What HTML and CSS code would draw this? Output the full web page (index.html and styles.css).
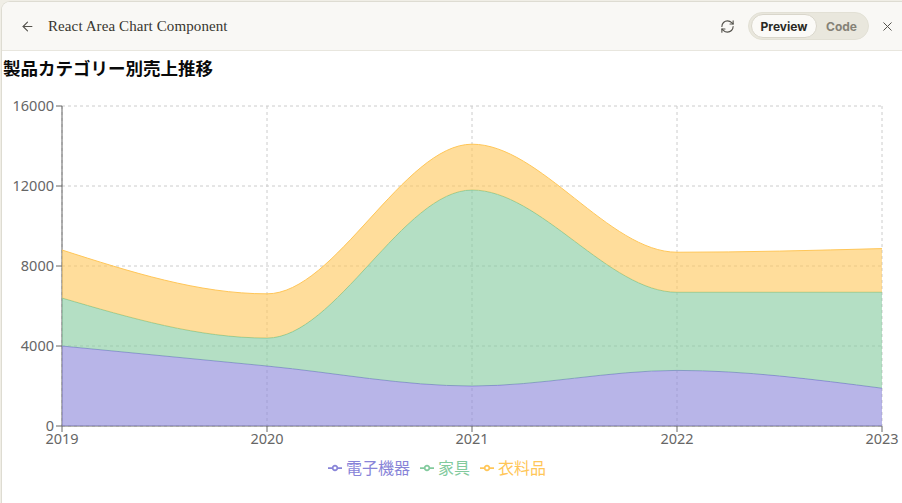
FILE: index.html
```html
<!DOCTYPE html>
<html lang="ja">
<head>
<meta charset="utf-8">
<title>React Area Chart Component</title>
<link rel="stylesheet" href="styles.css">
</head>
<body>
<div class="frame">
  <div class="panel">
    <header class="topbar">
      <div class="topbar-left">
        <svg class="icon icon-back" viewBox="0 0 24 24" width="15" height="15"><path d="M12 19l-7-7 7-7"/><path d="M19 12H5"/></svg>
        <span class="doc-title">React Area Chart Component</span>
      </div>
      <div class="topbar-right">
        <svg class="icon icon-refresh" viewBox="0 0 24 24" width="15" height="15"><path d="M3 12a9 9 0 0 1 9-9 9.75 9.75 0 0 1 6.74 2.74L21 8"/><path d="M21 3v5h-5"/><path d="M21 12a9 9 0 0 1-9 9 9.75 9.75 0 0 1-6.74-2.74L3 16"/><path d="M8 16H3v5"/></svg>
        <div class="toggle">
          <span class="seg seg-active">Preview</span>
          <span class="seg">Code</span>
        </div>
        <svg class="icon icon-close" viewBox="0 0 24 24" width="15" height="15"><path d="M18 6 6 18"/><path d="m6 6 12 12"/></svg>
      </div>
    </header>
    <main class="content">
      <h2 class="chart-title">製品カテゴリー別売上推移</h2>
      <svg class="chart" viewBox="2 84 900 400" width="900" height="400">
        <g class="grid">
          <line x1="62" y1="425" x2="882" y2="425"/>
          <line x1="62" y1="345" x2="882" y2="345"/>
          <line x1="62" y1="265" x2="882" y2="265"/>
          <line x1="62" y1="185" x2="882" y2="185"/>
          <line x1="62" y1="105" x2="882" y2="105"/>
          <line x1="62" y1="105" x2="62" y2="425"/>
          <line x1="267" y1="105" x2="267" y2="425"/>
          <line x1="472" y1="105" x2="472" y2="425"/>
          <line x1="677" y1="105" x2="677" y2="425"/>
          <line x1="882" y1="105" x2="882" y2="425"/>
        </g>
        <g class="axis">
          <line x1="62" y1="425" x2="882" y2="425"/>
          <line x1="62" y1="105" x2="62" y2="425"/>
          <line x1="62" y1="425" x2="62" y2="431"/>
          <line x1="267" y1="425" x2="267" y2="431"/>
          <line x1="472" y1="425" x2="472" y2="431"/>
          <line x1="677" y1="425" x2="677" y2="431"/>
          <line x1="882" y1="425" x2="882" y2="431"/>
          <line x1="56" y1="425" x2="62" y2="425"/>
          <line x1="56" y1="345" x2="62" y2="345"/>
          <line x1="56" y1="265" x2="62" y2="265"/>
          <line x1="56" y1="185" x2="62" y2="185"/>
          <line x1="56" y1="105" x2="62" y2="105"/>
        </g>
        <g class="tick-labels">
          <text class="ytick" x="54" y="425" dy="0.355em">0</text>
          <text class="ytick" x="54" y="345" dy="0.355em">4000</text>
          <text class="ytick" x="54" y="265" dy="0.355em">8000</text>
          <text class="ytick" x="54" y="185" dy="0.355em">12000</text>
          <text class="ytick" x="54" y="105" dy="0.355em">16000</text>
          <text class="xtick" x="62" y="433" dy="0.71em">2019</text>
          <text class="xtick" x="267" y="433" dy="0.71em">2020</text>
          <text class="xtick" x="472" y="433" dy="0.71em">2021</text>
          <text class="xtick" x="677" y="433" dy="0.71em">2022</text>
          <text class="xtick" x="882" y="433" dy="0.71em">2023</text>
        </g>
        <g class="areas">
          <path id="a1-fill" class="area-fill fill-purple"/>
          <path id="a1-line" class="area-line line-purple"/>
          <path id="a2-fill" class="area-fill fill-green"/>
          <path id="a2-line" class="area-line line-green"/>
          <path id="a3-fill" class="area-fill fill-yellow"/>
          <path id="a3-line" class="area-line line-yellow"/>
        </g>
        <g class="legend">
          <svg x="328" y="460" width="14" height="14" viewBox="0 0 32 32" class="legend-icon line-purple"><path d="M0,16h10.67A5.33,5.33,0,1,1,21.33,16H32M21.33,16A5.33,5.33,0,1,1,10.67,16"/></svg>
          <text class="legend-text text-purple" x="346" y="472.5">電子機器</text>
          <svg x="420" y="460" width="14" height="14" viewBox="0 0 32 32" class="legend-icon line-green"><path d="M0,16h10.67A5.33,5.33,0,1,1,21.33,16H32M21.33,16A5.33,5.33,0,1,1,10.67,16"/></svg>
          <text class="legend-text text-green" x="438" y="472.5">家具</text>
          <svg x="480" y="460" width="14" height="14" viewBox="0 0 32 32" class="legend-icon line-yellow"><path d="M0,16h10.67A5.33,5.33,0,1,1,21.33,16H32M21.33,16A5.33,5.33,0,1,1,10.67,16"/></svg>
          <text class="legend-text text-yellow" x="498" y="472.5">衣料品</text>
        </g>
      </svg>
    </main>
  </div>
</div>
<script src="script.js"></script>
</body>
</html>
```

FILE: styles.css
```css
* { box-sizing: border-box; }
html, body { margin: 0; height: 100%; }
body {
  background: #f0eee6;
  overflow: hidden;
  font-family: "Noto Sans", "Noto Sans CJK JP", sans-serif;
}
.frame {
  height: 100%;
  padding: 1px 0 0 1px;
}
.panel {
  height: 100%;
  background: #ffffff;
  border-top: 1px solid #dedcd2;
  border-left: 1px solid #dedcd2;
  border-top-left-radius: 9px;
  overflow: hidden;
  display: flex;
  flex-direction: column;
}
.topbar {
  height: 49px;
  flex: none;
  background: #f9f8f5;
  border-bottom: 1px solid #e8e6de;
  display: flex;
  align-items: center;
  justify-content: space-between;
  padding: 0 7px 0 18px;
}
.topbar-left, .topbar-right {
  display: flex;
  align-items: center;
}
.topbar-left { gap: 13px; }
.topbar-right { gap: 13px; }
.icon-close { margin-left: -2px; }
.icon {
  fill: none;
  stroke: #55534d;
  stroke-width: 1.8;
  stroke-linecap: round;
  stroke-linejoin: round;
  display: block;
}
.icon-close { stroke-width: 1.6; }
.doc-title {
  font-family: "Liberation Serif", serif;
  font-size: 15px;
  color: #38362f;
  letter-spacing: 0.1px;
}
.toggle {
  display: flex;
  align-items: center;
  height: 28px;
  width: 121px;
  padding: 2px;
  border-radius: 14px;
  background: #e9e7dd;
  border: 1px solid #e2e0d5;
}
.seg {
  font-family: "Inter", "Liberation Sans", sans-serif;
  font-size: 12px;
  font-weight: 700;
  color: #858277;
  height: 24px;
  display: flex;
  align-items: center;
  justify-content: center;
  flex: 1;
}
.seg-active {
  flex: none;
  width: 66px;
  background: #fbfaf7;
  border: 1px solid #d9d6cb;
  border-radius: 12px;
  color: #2a2924;
}
.content {
  flex: 1;
  background: #ffffff;
}
.chart-title {
  margin: 0;
  height: 34px;
  line-height: 33px;
  padding-left: 1px;
  font-family: "Noto Sans CJK JP", sans-serif;
  font-size: 17.5px;
  font-weight: 700;
  color: #0a0a0a;
}
.chart {
  display: block;
  font-family: "Noto Sans", "Noto Sans CJK JP", sans-serif;
}
.grid line {
  stroke: #cccccc;
  stroke-dasharray: 3 3;
  stroke-width: 1;
}
.axis line {
  stroke: #666666;
  stroke-width: 1;
}
.ytick, .xtick {
  fill: #666666;
  font-size: 14.5px;
}
.ytick { text-anchor: end; }
.xtick { text-anchor: middle; }
.area-fill { stroke: none; fill-opacity: 0.6; }
.area-line { fill: none; stroke-width: 1; }
.fill-purple { fill: #8884d8; }
.fill-green { fill: #82ca9d; }
.fill-yellow { fill: #ffc658; }
.line-purple { stroke: #8884d8; }
.line-green { stroke: #82ca9d; }
.line-yellow { stroke: #ffc658; }
.legend-icon path { fill: none; stroke-width: 4; }
.legend-text {
  font-family: "Noto Sans CJK JP", sans-serif;
  font-size: 16px;
}
.text-purple { fill: #8884d8; }
.text-green { fill: #82ca9d; }
.text-yellow { fill: #ffc658; }
```

FILE: script.js
```js
(function () {
  var xs = [62, 267, 472, 677, 882];
  var base = 425, scale = 0.02;
  var series = [
    [4000, 3000, 2000, 2780, 1890],
    [2400, 1398, 9800, 3908, 4800],
    [2400, 2210, 2290, 2000, 2181]
  ];

  function sign(x) { return x < 0 ? -1 : 1; }
  function slope3(p0, p1, p2) {
    var h0 = p1[0] - p0[0], h1 = p2[0] - p1[0];
    var s0 = (p1[1] - p0[1]) / (h0 || (h1 < 0 && -0));
    var s1 = (p2[1] - p1[1]) / (h1 || (h0 < 0 && -0));
    var p = (s0 * h1 + s1 * h0) / (h0 + h1);
    return (sign(s0) + sign(s1)) * Math.min(Math.abs(s0), Math.abs(s1), 0.5 * Math.abs(p)) || 0;
  }
  function slope2(p0, p1, t) {
    var h = p1[0] - p0[0];
    return h ? (3 * (p1[1] - p0[1]) / h - t) / 2 : t;
  }
  function monotone(pts, withMove) {
    var d = withMove ? 'M' + pts[0][0] + ',' + pts[0][1] : '';
    var n = pts.length;
    function seg(p0, p1, t0, t1) {
      var dx = (p1[0] - p0[0]) / 3;
      d += 'C' + (p0[0] + dx) + ',' + (p0[1] + dx * t0) + ',' + (p1[0] - dx) + ',' + (p1[1] - dx * t1) + ',' + p1[0] + ',' + p1[1];
    }
    var t0;
    for (var i = 2; i < n; i++) {
      var t1 = slope3(pts[i - 2], pts[i - 1], pts[i]);
      if (i === 2) seg(pts[0], pts[1], slope2(pts[0], pts[1], t1), t1);
      else seg(pts[i - 2], pts[i - 1], t0, t1);
      t0 = t1;
    }
    seg(pts[n - 2], pts[n - 1], t0, slope2(pts[n - 2], pts[n - 1], t0));
    return d;
  }

  var cum = [0, 0, 0, 0, 0];
  var prevPts = null;
  series.forEach(function (vals, k) {
    var pts = xs.map(function (x, i) { cum[i] += vals[i]; return [x, base - cum[i] * scale]; });
    var top = monotone(pts, true);
    var fill;
    if (!prevPts) {
      fill = top + 'L' + xs[4] + ',' + base + 'L' + xs[0] + ',' + base + 'Z';
    } else {
      var rev = prevPts.slice().reverse();
      fill = top + 'L' + rev[0][0] + ',' + rev[0][1] + monotone(rev, false) + 'Z';
    }
    document.getElementById('a' + (k + 1) + '-fill').setAttribute('d', fill);
    document.getElementById('a' + (k + 1) + '-line').setAttribute('d', top);
    prevPts = pts;
  });
})();
```
